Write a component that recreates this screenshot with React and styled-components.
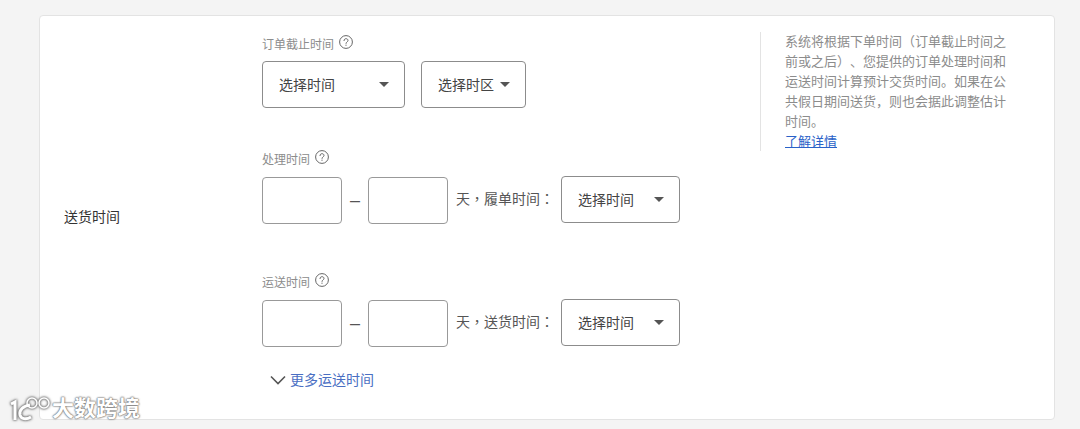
import React from "react";
import styled, { createGlobalStyle } from "styled-components";

const GlobalStyle = createGlobalStyle`
    html, body {
        margin: 0;
        padding: 0;
        background: #f4f4f4;
    }
    body {
        font-family: "Liberation Sans", "Noto Sans CJK SC", sans-serif;
        color: #333;
        text-spacing-trim: space-all;
    }
`;

const Page = styled.div`
    position: relative;
    height: 429px;
    overflow: hidden;
    padding: 15px 25px 0 39px;
    box-sizing: border-box;
`;

const Card = styled.div`
    display: flex;
    box-sizing: border-box;
    height: 405px;
    padding: 17px 0 0 24px;
    background: #fff;
    border: 1px solid #e3e3e3;
    border-radius: 4px;
`;

const RowLabel = styled.div`
    width: 198px;
    flex: none;
    align-self: center;
    margin-top: -19px;
    font-size: 14px;
    line-height: 20px;
    color: #333;
`;

const FormColumn = styled.div`
    width: 498px;
    flex: none;
`;

const Field = styled.div`
    margin-bottom: ${(p) => p.$gap}px;
`;

const FieldLabel = styled.div`
    display: flex;
    align-items: center;
    gap: 5px;
    height: 20px;
    margin-bottom: 8px;
    font-size: 12px;
    color: #8c8c8c;
`;

const Controls = styled.div`
    display: flex;
    align-items: flex-start;
    gap: ${(p) => p.$gap || 0}px;
`;

const Select = styled.div`
    display: flex;
    align-items: center;
    justify-content: space-between;
    box-sizing: border-box;
    width: ${(p) => p.$width}px;
    height: 47px;
    padding: 0 15px 0 16px;
    background: #fff;
    border: 1px solid #8c8c8c;
    border-radius: 4px;
    font-size: 14px;
    color: #444;
`;

const SelectText = styled.span`
    margin-bottom: 2px;
`;

const Caret = styled.span`
    width: 0;
    height: 0;
    border-left: 5.5px solid transparent;
    border-right: 5.5px solid transparent;
    border-top: 5px solid #555;
`;

const NumberInput = styled.input`
    box-sizing: border-box;
    width: 80px;
    height: 47px;
    margin-top: 1px;
    background: #fff;
    border: 1px solid #999;
    border-radius: 4px;
    outline: none;
`;

const Dash = styled.span`
    width: 26px;
    margin-top: 1px;
    text-align: center;
    font-size: 18px;
    line-height: 47px;
    color: #555;
`;

const Suffix = styled.span`
    width: 113px;
    padding-left: 8px;
    box-sizing: border-box;
    font-size: 14px;
    line-height: 47px;
    color: #555;
    white-space: pre;
`;

const Punct = styled.span`
    display: inline-block;
    font-family: "Noto Sans CJK TC", sans-serif;
    line-height: 1;
`;

const MoreLink = styled.a`
    display: flex;
    align-items: center;
    gap: 4px;
    margin: 23px 0 0 8px;
    font-size: 14px;
    line-height: 20px;
    color: #4a6fc3;
    text-decoration: none;
`;

const Note = styled.div`
    align-self: flex-start;
    box-sizing: border-box;
    width: 248px;
    height: 119px;
    margin-top: -1px;
    padding: 0 0 0 24px;
    border-left: 1px solid #e3e3e3;
    font-size: 13px;
    line-height: 20px;
    color: #8c8c8c;
`;

const NoteLink = styled.a`
    display: block;
    color: #2a62c8;
    text-decoration: underline;
`;

const Watermark = styled.div`
    position: absolute;
    left: 9px;
    bottom: 6px;
    display: flex;
    align-items: center;
    gap: 1px;
    font-size: 22px;
    line-height: 26px;
    font-weight: 700;
    color: #fff;
    text-shadow: 0 0 2px #777, 0 0 2px #777, 0 0 1px #777;
`;

const HelpIcon = styled.svg`
    margin-top: -2px;
`;

const LogoIcon = styled.svg`
    filter: drop-shadow(0 0 1px #777) drop-shadow(0 0 1px #777);
`;

const Help = () => (
    <HelpIcon width="14" height="14" viewBox="0 0 14 14" fill="none" stroke="#666" strokeWidth="1">
        <circle cx="7" cy="7" r="6.400" />
        <path d="M5 5.6c0-1.2.9-1.9 2-1.9s2 .7 2 1.7c0 1.500-2 1.500-2 3" strokeLinecap="round" />
        <circle cx="7" cy="10.200" r=".6" fill="#666" stroke="none" />
    </HelpIcon>
);

const Chevron = () => (
    <svg width="16" height="10" viewBox="0 0 16 10" fill="none" stroke="#555" strokeWidth="1.600">
        <path d="M1 1.500l7 7 7-7" />
    </svg>
);

const WatermarkLogo = () => (
    <LogoIcon width="42" height="28" viewBox="0 0 42 28" fill="none" stroke="#fff" strokeWidth="3">
        <path d="M2 9l4-2v18" />
        <path d="M21 10c-7 1-11 5-10 10 1 4 6 5 11 2" />
        <circle cx="23" cy="8" r="5" strokeWidth="1.500" />
        <circle cx="35" cy="8" r="5" strokeWidth="1.500" />
    </LogoIcon>
);

const App = () => {
    return (
        <Page>
            <GlobalStyle />
            <Card>
                <RowLabel>送货时间</RowLabel>
                <FormColumn>
                    <Field $gap={40}>
                        <FieldLabel>订单截止时间 <Help /></FieldLabel>
                        <Controls $gap={16}>
                            <Select $width={143}><SelectText>选择时间</SelectText><Caret /></Select>
                            <Select $width={105}><SelectText>选择时区</SelectText><Caret /></Select>
                        </Controls>
                    </Field>
                    <Field $gap={47}>
                        <FieldLabel>处理时间 <Help /></FieldLabel>
                        <Controls>
                            <NumberInput />
                            <Dash>–</Dash>
                            <NumberInput />
                            <Suffix>天<Punct>，</Punct>履单时间<Punct>：</Punct></Suffix>
                            <Select $width={119}><SelectText>选择时间</SelectText><Caret /></Select>
                        </Controls>
                    </Field>
                    <Field $gap={0}>
                        <FieldLabel>运送时间 <Help /></FieldLabel>
                        <Controls>
                            <NumberInput />
                            <Dash>–</Dash>
                            <NumberInput />
                            <Suffix>天<Punct>，</Punct>送货时间<Punct>：</Punct></Suffix>
                            <Select $width={119}><SelectText>选择时间</SelectText><Caret /></Select>
                        </Controls>
                    </Field>
                    <MoreLink href="#"><Chevron />更多运送时间</MoreLink>
                </FormColumn>
                <Note>
                    系统将根据下单时间（订单截止时间之前或之后）、您提供的订单处理时间和运送时间计算预计交货时间。如果在公共假日期间送货，则也会据此调整估计时间。
                    <NoteLink href="#">了解详情</NoteLink>
                </Note>
            </Card>
            <Watermark><WatermarkLogo />大数跨境</Watermark>
        </Page>
    );
};

export default App;
